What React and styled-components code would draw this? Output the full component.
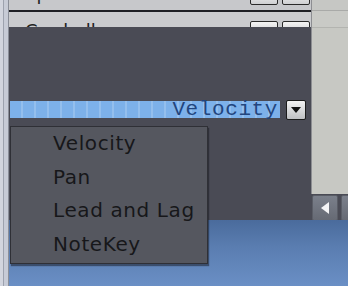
import React from "react";
import styled, { createGlobalStyle } from "styled-components";

const Global = createGlobalStyle`
  html, body { margin: 0; padding: 0; }
  body { width: 348px; height: 286px; overflow: hidden; font-family: "Liberation Sans", Arial, sans-serif; }
`;

const Page = styled.div`
  position: relative;
  width: 348px;
  height: 286px;
  display: flex;
  overflow: hidden;
  background: #c9ccd6;
`;

const LeftStrip = styled.div`
  width: 9px;
  flex: none;
  background: linear-gradient(to right, #d2d5de 0 3px, #9da2ae 3px 4px, #c7cbd6 4px 8px, #8a8e98 8px 9px);
`;

const Column = styled.div`
  flex: 1;
  display: flex;
  flex-direction: column;
`;

const Window = styled.div`
  height: 220px;
  display: flex;
  flex: none;
`;

const MainPanel = styled.div`
  width: 302px;
  display: flex;
  flex-direction: column;
`;

const Row = styled.div`
  height: ${(p) => p.$h}px;
  background: ${(p) => p.$bg};
  display: flex;
  align-items: flex-start;
  overflow: hidden;
  padding-left: 16px;
  flex: none;
`;

const RowLabel = styled.span`
  font-family: "DejaVu Sans", Verdana, sans-serif;
  font-size: 18px;
  line-height: 22px;
  color: #222;
  margin-top: ${(p) => p.$top}px;
  flex: 1;
  white-space: nowrap;
`;

const RowButtons = styled.div`
  display: flex;
  gap: 4px;
  margin-top: ${(p) => p.$top}px;
  margin-right: 1px;
`;

const SmallButton = styled.div`
  width: 26px;
  height: 12px;
  background: linear-gradient(#f4f4f4, #cfd0d2);
  border: 1px solid #2a2a2a;
  border-radius: 2px;
`;

const Divider = styled.div`
  height: 2px;
  background: #1e1f24;
  flex: none;
`;

const DarkArea = styled.div`
  flex: 1;
  background: #4a4b55;
  padding: 73px 5px 0 1px;
  display: flex;
  gap: 6px;
  align-items: flex-start;
`;

const Field = styled.div`
  width: 270px;
  height: 17px;
  margin-top: 1px;
  background:
    repeating-linear-gradient(to right, transparent 0 11px, rgba(255,255,255,0.18) 11px 13px),
    #7db1ea;
  display: flex;
  justify-content: flex-end;
  align-items: center;
  padding-right: 2px;
  box-sizing: border-box;
`;

const FieldText = styled.span`
  font-family: "Liberation Mono", "DejaVu Sans Mono", monospace;
  font-size: 21px;
  letter-spacing: 0.6px;
  color: #22457e;
  line-height: 17px;
`;

const DropButton = styled.div`
  width: 18px;
  height: 18px;
  background: linear-gradient(#f2f2f2, #bfc0c3);
  border: 1px solid #1c1c1c;
  border-radius: 2px;
  display: flex;
  align-items: center;
  justify-content: center;
`;

const RightPanel = styled.div`
  flex: 1;
  display: flex;
  flex-direction: column;
  background: #4a4b55;
`;

const RightTop = styled.div`
  height: 194px;
  background: linear-gradient(#c6c7c4 0 10px, #a9aaa8 10px 11px, #c9cac6 11px 27px, #b3b4b0 27px 28px, #c7c8c3 28px);
  border-left: 1px solid #8d8e92;
  display: flex;
  justify-content: flex-end;
  align-items: flex-start;
  padding-top: 60px;
  box-sizing: border-box;
`;

const BlackBar = styled.div`
  width: 4px;
  height: 134px;
  background: #0c0c0c;
`;

const ScrollRow = styled.div`
  display: flex;
  gap: 3px;
  padding: 1px 0 0 1px;
`;

const ScrollButton = styled.div`
  width: 24px;
  height: 24px;
  background: linear-gradient(#7b808b, #666a74);
  border: 1px solid #5a5d66;
  border-radius: 2px;
  display: flex;
  align-items: center;
  justify-content: center;
  flex: none;
`;

const Desktop = styled.div`
  flex: 1;
  background: linear-gradient(#4a6b9c, #5a7db0 40%, #6a8fc5);
`;

const Menu = styled.div`
  position: absolute;
  left: 10px;
  top: 126px;
  width: 198px;
  height: 138px;
  box-sizing: border-box;
  background: #55575f;
  border: 1px solid #2f3036;
  box-shadow: 1px 2px 1px rgba(20, 22, 30, 0.5);
  padding: 0 0 0 42px;
  display: flex;
  flex-direction: column;
`;

const MenuItem = styled.div`
  font-family: "DejaVu Sans", Verdana, sans-serif;
  font-size: 20px;
  letter-spacing: 0.6px;
  line-height: 33px;
  height: 33.5px;
  color: #17171a;
  white-space: nowrap;
`;

export default function App() {
  const items = ["Velocity", "Pan", "Lead and Lag", "NoteKey"];
  return (
    <>
      <Global />
      <Page>
        <LeftStrip />
        <Column>
          <Window>
            <MainPanel>
              <Row $h={10} $bg="#c7c8cb">
                <RowLabel $top={-17}>Spacebar</RowLabel>
                <RowButtons $top={-9}>
                  <SmallButton />
                  <SmallButton />
                </RowButtons>
              </Row>
              <Divider />
              <Row $h={15} $bg="#cacbce">
                <RowLabel $top={8}>Cowbell</RowLabel>
                <RowButtons $top={9}>
                  <SmallButton />
                  <SmallButton />
                </RowButtons>
              </Row>
              <DarkArea>
                <Field>
                  <FieldText>Velocity</FieldText>
                </Field>
                <DropButton>
                  <svg width="10" height="6" viewBox="0 0 10 6">
                    <path d="M0 0 H10 L5 6 Z" fill="#111" />
                  </svg>
                </DropButton>
              </DarkArea>
            </MainPanel>
            <RightPanel>
              <RightTop>
                <BlackBar />
              </RightTop>
              <ScrollRow>
                <ScrollButton>
                  <svg width="8" height="12" viewBox="0 0 8 12">
                    <path d="M8 0 V12 L0 6 Z" fill="#f4f4f6" />
                  </svg>
                </ScrollButton>
                <ScrollButton />
              </ScrollRow>
            </RightPanel>
          </Window>
          <Desktop />
        </Column>
        <Menu>
          {items.map((t) => (
            <MenuItem key={t}>{t}</MenuItem>
          ))}
        </Menu>
      </Page>
    </>
  );
}
